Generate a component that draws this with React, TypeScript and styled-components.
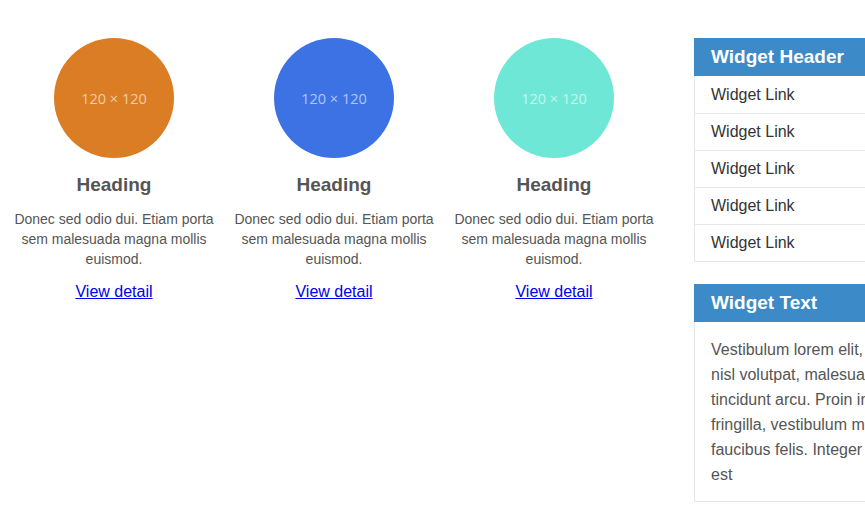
import React from "react";
import styled, { createGlobalStyle } from "styled-components";

const GlobalStyle = createGlobalStyle`
  html, body {
    margin: 0;
    padding: 0;
    background: #fff;
    overflow: hidden;
  }
  body {
    font-family: "Liberation Sans", Arial, sans-serif;
  }
`;

const FEATURES = [
  { color: "#db7d25" },
  { color: "#3d72e5" },
  { color: "#6fe7d7" },
];

const LINKS = ["Widget Link", "Widget Link", "Widget Link", "Widget Link", "Widget Link"];

const App = () => {
  return (
    <>
      <GlobalStyle />
      <Page>
        <Features>
          {FEATURES.map((f, i) => (
            <Feature key={i}>
              <Circle $color={f.color}>120 × 120</Circle>
              <Heading>Heading</Heading>
              <Text>Donec sed odio dui. Etiam porta sem malesuada magna mollis euismod.</Text>
              <DetailLink href="#">View detail</DetailLink>
            </Feature>
          ))}
        </Features>
        <Sidebar>
          <Widget>
            <WidgetHeader>Widget Header</WidgetHeader>
            <LinkList>
              {LINKS.map((l, i) => (
                <LinkItem key={i}>{l}</LinkItem>
              ))}
            </LinkList>
          </Widget>
          <Widget>
            <WidgetHeader>Widget Text</WidgetHeader>
            <WidgetBody>
              Vestibulum lorem elit, gravida ac nisl volutpat, malesuada semper tincidunt arcu. Proin in
              urna fringilla, vestibulum mi nec, faucibus felis. Integer sollicitudin est
            </WidgetBody>
          </Widget>
        </Sidebar>
      </Page>
    </>
  );
};

export default App;

const Page = styled.div`
  display: flex;
  align-items: flex-start;
  width: 1200px;
  padding: 38px 0 0 4px;
`;

const Features = styled.div`
  display: flex;
`;

const Feature = styled.div`
  width: 220px;
  padding: 0 10px;
  box-sizing: border-box;
  text-align: center;
`;

const Circle = styled.div<{ $color: string }>`
  width: 120px;
  height: 120px;
  margin: 0 auto;
  border-radius: 50%;
  background: ${(p) => p.$color};
  display: flex;
  align-items: center;
  justify-content: center;
  font-family: "Open Sans", sans-serif;
  font-size: 14.5px;
  color: rgba(255, 255, 255, 0.6);
`;

const Heading = styled.h2`
  margin: 17px 0 0;
  font-size: 19px;
  line-height: 20px;
  font-weight: bold;
  color: #555;
`;

const Text = styled.p`
  margin: 14px 0 0;
  font-size: 14px;
  line-height: 20px;
  color: #555;
`;

const DetailLink = styled.a`
  display: inline-block;
  margin-top: 13px;
  font-size: 16px;
  line-height: 20px;
  color: #0000ee;
`;

const Sidebar = styled.div`
  width: 280px;
  margin-left: 30px;
  display: flex;
  flex-direction: column;
  gap: 22px;
`;

const Widget = styled.div`
  border: 1px solid #e6e6e6;
  border-top: none;
`;

const WidgetHeader = styled.div`
  margin: 0 -1px;
  height: 38px;
  line-height: 38px;
  padding: 0 17px;
  background: #3d8ac9;
  color: #fff;
  font-size: 19px;
  font-weight: bold;
`;

const LinkList = styled.ul`
  list-style: none;
  margin: 0;
  padding: 0;
`;

const LinkItem = styled.li`
  height: 36px;
  line-height: 36px;
  padding: 0 16px;
  font-size: 16px;
  color: #333;
  border-top: 1px solid #e8e8e8;
  &:first-child {
    border-top: none;
    height: 37px;
    line-height: 37px;
  }
`;

const WidgetBody = styled.div`
  padding: 15px 16px 14px;
  font-size: 16px;
  line-height: 25px;
  color: #555;
`;
